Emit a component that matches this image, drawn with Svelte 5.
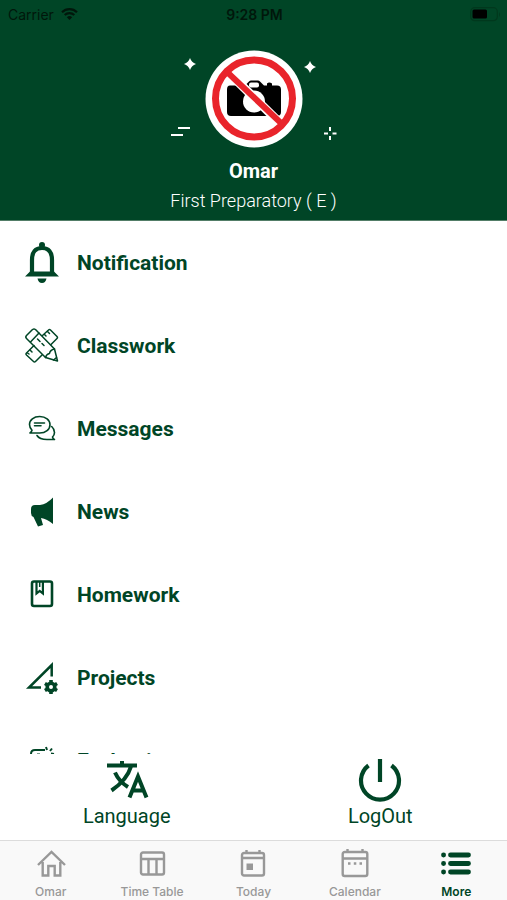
<script>
  const items = [
    { key: 'notification', label: 'Notification' },
    { key: 'classwork', label: 'Classwork' },
    { key: 'messages', label: 'Messages' },
    { key: 'news', label: 'News' },
    { key: 'homework', label: 'Homework' },
    { key: 'projects', label: 'Projects' },
    { key: 'evaluation', label: 'Evaluation' }
  ];

  const tabs = [
    { key: 'home', label: 'Omar' },
    { key: 'table', label: 'Time Table' },
    { key: 'today', label: 'Today' },
    { key: 'calendar', label: 'Calendar' },
    { key: 'more', label: 'More' }
  ];

  let active = $state('more');

  // gear teeth, one every 60 degrees
  const teeth = [0, 60, 120, 180, 240, 300];
</script>

<div class="screen">
  <header>
    <div class="status">
      <span class="carrier">
        Carrier
        <svg width="17" height="12" viewBox="0 0 17 12" fill="none" stroke="currentColor" stroke-width="2.2">
          <path d="M1 4.2a10.8 10.8 0 0 1 15 0M3.7 7a7 7 0 0 1 9.6 0" />
          <path d="M8.500 12 5.800 9.200a4 4 0 0 1 5.400 0z" fill="currentColor" stroke="none" />
        </svg>
      </span>
      <span class="time">9:28 PM</span>
      <span class="battery">
        <svg width="31" height="15" viewBox="0 0 31 15">
          <rect x="0.700" y="0.700" width="26.600" height="13" rx="4" fill="none" stroke="#00381d" stroke-width="1.200" />
          <rect x="2.500" y="2.500" width="14.500" height="9" rx="1.500" fill="#000" />
          <path d="M29 5v5q2-2.500 0-5" fill="#00381d" />
        </svg>
      </span>
    </div>

    <svg class="avatar" width="170" height="98" viewBox="0 0 170 98" role="img" aria-label="No photo">
      <circle cx="85" cy="49" r="48.500" fill="#fff" />
      <path d="M61 35.500h15l4-4q1-1 2-1h7q1 0 2 1l4 4h3v-2q2-2 5 0v2h5q4 0 4 4V62q0 4-4 4H62q-4 0-4-4V39.500q0-4 3-4z" fill="#000" />
      <rect x="80" y="32.500" width="10" height="5" rx="2" fill="#fff" />
      <circle cx="85" cy="51.500" r="11" fill="#fff" />
      <path d="m57 20 57 56" stroke="#fff" stroke-width="9" />
      <path d="m57 21 56 53" stroke="#e9242b" stroke-width="6" />
      <circle cx="85" cy="48.500" r="38.500" fill="none" stroke="#e9242b" stroke-width="7" />
      <g fill="#fff">
        <path d="M21 8q1.500 4.500 6 6-4.500 1.500-6 6-1.500-4.500-6-6 4.500-1.500 6-6z" />
        <path d="M141 11q1.500 4.500 6 6-4.500 1.500-6 6-1.500-4.500-6-6 4.500-1.500 6-6z" />
      </g>
      <path d="M9 78h12M2 85h12M161 77v4M161 86v4M155 83.500h4M163.500 83.500h4" stroke="#fff" stroke-width="2" />
    </svg>

    <h1>Omar</h1>
    <p>First Preparatory ( E )</p>
  </header>

  <ul class="menu">
    {#each items as item}
      <li>
        <a href="#{item.key}">
          <svg class="menu-icon" viewBox="0 0 34 42" aria-hidden="true">
            {#if item.key === 'notification'}
              <path d="M7 32V18q0-12 10-12t10 12v14" fill="none" stroke="currentColor" stroke-width="4.200" />
              <circle cx="17" cy="3" r="3" fill="currentColor" />
              <path d="M5 29.500h24l5 5H0zM12.500 36.500h9q-1 4.500-4.500 4.500t-4.500-4.500z" fill="currentColor" />
            {:else if item.key === 'classwork'}
              <g fill="none" stroke="currentColor" stroke-width="1.500" stroke-linejoin="round" stroke-linecap="round">
                <path d="m17.500 10.500 6-5.500q1-1 2 0l6.500 6.500q1 1 0 2l-6 6" />
                <path d="M9 20.500 1.500 28q-1 1 0 2l7 6.500q1 1 2 0l6.500-6.500" />
                <path d="m22.500 6.500 2 2M19.500 9.500l1.500 1.500M5 25l2 2M2.500 28l1.500 1" />
                <path d="M1.500 13.500q-1.500-1.500 0-3l6-6q1.500-1 3 0L29.500 24l3 12-12-3.500z" />
                <path d="m5.500 17 8.500-9M20.500 32.500q1-3.500 4-4 .5-3.500 5-4.500M28.500 35l3-2.500" />
                <path d="m12.500 14 2.500 2.500M17 18.500l2 2" />
              </g>
            {:else if item.key === 'messages'}
              <g fill="none" stroke="currentColor" stroke-width="1.600" stroke-linejoin="round" stroke-linecap="round">
                <path d="M5 25h9.700c6 0 10.300-3.600 10.300-8.300S20.700 8.500 14.700 8.500 4.500 12 4.500 16.500q0 3 2.500 5.700-.5 1.800-2 2.800z" />
                <path d="M9.500 15h10M9.500 17.700h6.500" />
                <path d="M26.700 18.500q2.800 2.500 2.800 6 0 2.500-2 4.500.5 2 2 2.500H22q-7.500 0-10-4" />
              </g>
            {:else if item.key === 'news'}
              <path d="M28 6.500V33q-6-5-12-6l2 7-5 1.500-4.500-9.500q-2.500-1-2.500-4v-4q0-4 4-4h5Q22 13 28 6.500z" fill="currentColor" />
            {:else if item.key === 'homework'}
              <rect x="7" y="7.500" width="20" height="24.500" rx="2" fill="none" stroke="currentColor" stroke-width="2.600" />
              <path d="M11.500 8v11.500L14.700 17l3.200 2.500V8" fill="none" stroke="currentColor" stroke-width="2.200" />
              <path d="M14.700 8v5" stroke="currentColor" stroke-width="1.500" />
            {:else if item.key === 'projects'}
              <path d="M16 30.500H4L26.700 8V19.500" fill="none" stroke="currentColor" stroke-width="2.500" />
              <g transform="translate(26 30)" stroke="currentColor" stroke-width="3.600">
                {#each teeth as angle}
                  <path d="M0-4v-3" transform="rotate({angle})" />
                {/each}
                <circle r="3.800" fill="none" />
              </g>
            {:else}
              <g fill="none" stroke="currentColor" stroke-width="2">
                <path d="M6 34V14q0-4 4-4h10M21 7l1 3M27 8.500l-2 2.500M29 14l-3-.5M12 14.500h3" />
                <path d="M6 34h20V20" />
              </g>
            {/if}
          </svg>
          <span>{item.label}</span>
        </a>
      </li>
    {/each}
  </ul>

  <div class="actions">
    <button>
      <svg width="44" height="44" viewBox="0 0 44 44" fill="none" stroke="currentColor" stroke-width="4" aria-hidden="true">
        <path d="M2 7.500h30M17 3v5M26 8.500Q22 22 6.500 32.500M10 14.500q4 9 13 14.500" />
        <path d="m24.500 39.500 8.500-21 8.500 21M27 32.500h12" />
      </svg>
      Language
    </button>
    <button>
      <svg width="44" height="44" viewBox="0 0 44 44" fill="none" stroke="currentColor" stroke-width="4.200" aria-hidden="true">
        <path d="M10.500 7.500a19 19 0 1 0 23 0M22 1v23" />
      </svg>
      LogOut
    </button>
  </div>

  <nav>
    {#each tabs as tab}
      <button class:active={active === tab.key} onclick={() => (active = tab.key)}>
        <svg width="32" height="32" viewBox="0 0 32 32" fill="none" stroke="currentColor" stroke-width="2.400" aria-hidden="true">
          {#if tab.key === 'home'}
            <path d="M3 17 16.500 4 30 17M7.700 14v13.500h5.600V18h6.400v9.500h5.600V14" />
          {:else if tab.key === 'table'}
            <rect x="5" y="4.500" width="23" height="22" rx="2" />
            <path d="M5.500 11h22M12.500 11v15M20.500 11v15" />
          {:else if tab.key === 'today'}
            <rect x="5" y="5" width="22" height="22.500" rx="2" />
            <path d="M5 10h22M9.500 2v3M22.500 2v3" />
            <path d="M9.500 15.500H16V22H9.500z" fill="currentColor" stroke="none" />
          {:else if tab.key === 'calendar'}
            <rect x="3.700" y="4" width="24.600" height="24" rx="2" />
            <path d="M4 10.500h24M8.500 1v3M23.500 1v3" />
            <path d="M9 15.500h2.500M14.800 15.500h2.500M20.500 15.500h2.500" />
          {:else}
            <path d="M10.500 7h18M10.500 15.500h18M10.500 24h18" stroke-width="4.800" stroke-linecap="round" />
            <path d="M3.500 7h.1M3.500 15.500h.1M3.500 24h.1" stroke-width="4.800" stroke-linecap="round" />
          {/if}
        </svg>
        {tab.label}
      </button>
    {/each}
  </nav>
</div>

<style>
  :global(body) {
    margin: 0;
    background: #fff;
  }
  .screen {
    height: 100vh;
    display: flex;
    flex-direction: column;
    color: #004526;
    font-family: Roboto, sans-serif;
  }

  header {
    display: flex;
    flex-direction: column;
    align-items: center;
    padding-bottom: 4px;
    background: #004526;
    border-bottom: 1px solid #527d67;
    color: #fff;
  }
  .status {
    width: 100%;
    height: 28px;
    box-sizing: border-box;
    padding: 0 6px 0 8px;
    display: grid;
    grid-template-columns: 1fr auto 1fr;
    align-items: center;
    color: #00170b;
    font: 14px Inter, sans-serif;
  }
  .carrier {
    display: flex;
    align-items: center;
    gap: 7px;
  }
  .time {
    font-weight: 600;
  }
  .battery {
    display: flex;
    justify-content: flex-end;
  }
  .avatar {
    margin-top: 22px;
  }
  h1 {
    margin: 8px 0 0;
    font-size: 20px;
    line-height: 30px;
    font-weight: 700;
  }
  header p {
    margin: 0;
    font-size: 18px;
    line-height: 30px;
    font-weight: 300;
  }

  .menu {
    flex: 1;
    min-height: 0;
    margin: 0;
    padding: 0;
    list-style: none;
    overflow-y: auto;
    scrollbar-width: none;
  }
  .menu a {
    display: flex;
    align-items: center;
    gap: 18px;
    height: 83px;
    padding: 0 25px;
    color: inherit;
    font-size: 21px;
    font-weight: 700;
    text-decoration: none;
  }
  .menu-icon {
    width: 34px;
    height: 42px;
  }

  button {
    padding: 0;
    border: 0;
    background: none;
    color: inherit;
    font: inherit;
    cursor: pointer;
  }
  .actions,
  nav {
    display: grid;
    grid-auto-flow: column;
    grid-auto-columns: 1fr;
  }
  .actions button,
  nav button {
    display: flex;
    flex-direction: column;
    align-items: center;
  }
  .actions button {
    height: 86px;
    padding-top: 4px;
    box-sizing: border-box;
    font-size: 20px;
    line-height: 28px;
  }

  nav {
    height: 59px;
    border-top: 1px solid #dcdcdc;
    background: #f9f9f9;
    color: #989898;
    font: 500 12px/16px Inter, sans-serif;
  }
  nav button {
    padding-top: 7px;
    gap: 4px;
  }
  nav .active {
    color: #004526;
    font-weight: 600;
  }
</style>
